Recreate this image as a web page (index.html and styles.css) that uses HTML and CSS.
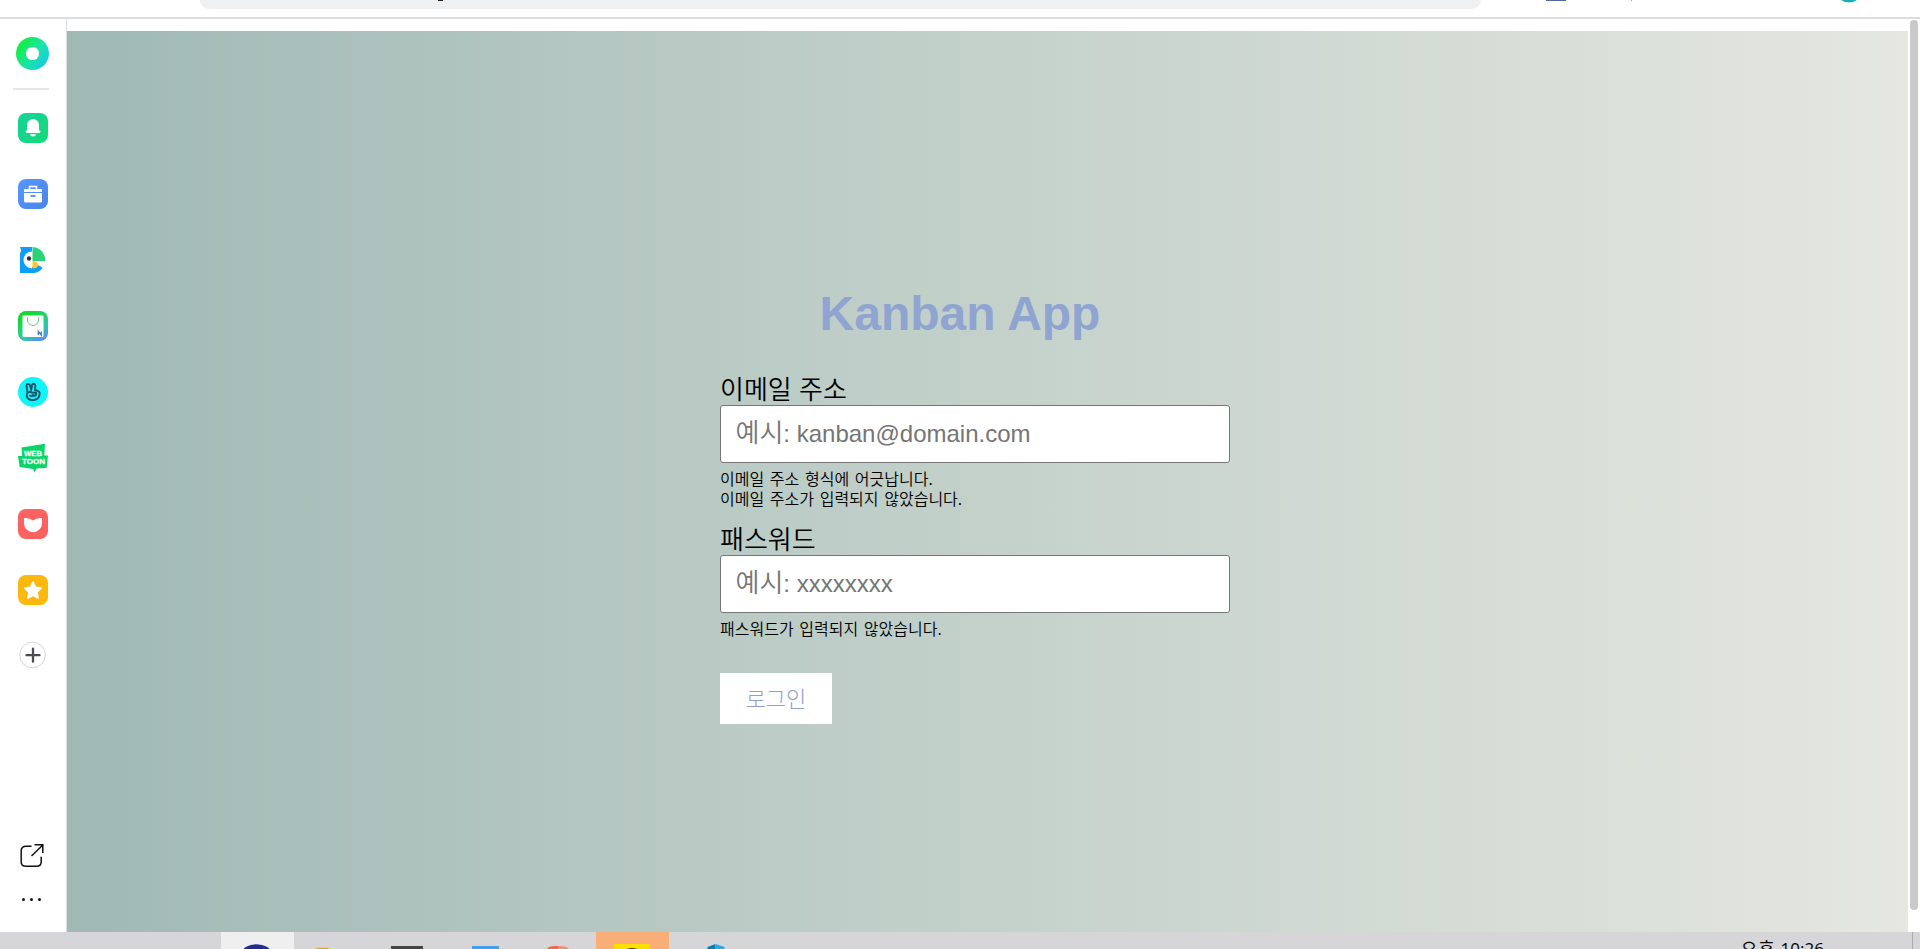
FILE: index.html
```html
<!DOCTYPE html>
<html lang="ko">
<head>
<meta charset="utf-8">
<title>Kanban App</title>
<link rel="stylesheet" href="styles.css">
</head>
<body>
<div class="screen">
  <header class="toolbar">
    <div class="address"><i class="address-mark"></i></div>
    <i class="tool-save"></i>
    <i class="tool-sep"></i>
    <svg class="tool-avatar" viewBox="0 0 18 3"><path d="M1 0h16q-3 2.400-8 2.400T1 0z" fill="#13aeb9"/></svg>
  </header>
  <div class="window">
    <nav class="sidebar">
      <svg class="home" viewBox="0 0 33 33"><defs><linearGradient id="home" x1="0" y1=".15" x2="1" y2=".85"><stop offset=".1" stop-color="#15ee3f"/><stop offset=".55" stop-color="#18e5a8"/><stop offset="1" stop-color="#1ec4ee"/></linearGradient></defs><circle cx="16.500" cy="16.500" r="16.500" fill="url(#home)"/><circle cx="16.500" cy="16.500" r="6.600" fill="#fff"/></svg>
      <i class="divider"></i>
      <div class="apps">
        <svg viewBox="0 0 30 30"><defs><linearGradient id="bell" x1="0" y1="0" x2="1" y2="1"><stop stop-color="#14d39b"/><stop offset="1" stop-color="#16da75"/></linearGradient></defs><rect width="30" height="30" rx="8" fill="url(#bell)"/><path d="M9 17.500V12a6 6 0 0 1 12 0v5.500h.6q1 .1.900 1.100t-1 1.400H8.600q-1-.4-1-1.400t.9-1.100z" fill="#fff"/><path d="M12 21.200h6q-.4 2.400-3 2.400t-3-2.400z" fill="#fff"/></svg>
        <svg viewBox="0 0 30 30"><defs><linearGradient id="work" x1="0" y1="0" x2="1" y2="1"><stop stop-color="#5698ff"/><stop offset="1" stop-color="#4a84e8"/></linearGradient></defs><rect width="30" height="30" rx="8" fill="url(#work)"/><path d="M11.500 10.500V7.500h7v3" fill="none" stroke="#fff" stroke-width="1.500"/><path d="M7 10h16q1 0 1 1v2H6v-2q0-1 1-1zM6 14h18v8q0 1.500-1.500 1.500h-15Q6 23.500 6 22z" fill="#fff"/><path d="M12.500 17h5" stroke="#4e8bf2" stroke-width="1.800"/></svg>
        <svg viewBox="0 0 30 30"><path d="M2 2h12v26H2V8Q4 6 2 2z" fill="#08a0fb"/><path d="M14 28c5 0 9-2 10.500-5.500L20 20l-6 2z" fill="#08a0fb"/><path d="M14.500 2q12 1 13 14h-13z" fill="#2bd277"/><path d="M14 6.500a8.500 8.500 0 0 0 0 17z" fill="#fff"/><circle cx="11" cy="13.500" r="2.200" fill="#3d2c38"/><path d="M14.500 16q5.500.5 6 5-2 2.500-6 2.500z" fill="#ffc12d"/></svg>
        <svg viewBox="0 0 30 30"><defs><linearGradient id="shop" x1=".2" y1="0" x2=".8" y2="1"><stop offset=".15" stop-color="#14d834"/><stop offset=".65" stop-color="#2ccaa8"/><stop offset="1" stop-color="#5b8af0"/></linearGradient></defs><rect width="30" height="30" rx="8" fill="url(#shop)"/><rect x="4.500" y="4.500" width="21" height="21.500" rx="1" fill="#fff"/><path d="M9.500 6v3a5.500 5.500 0 0 0 11 0V6" fill="none" stroke="#62cf88"/><path d="M20.300 24v-3.500l3 3.500v-3.500" fill="none" stroke="#3d83cf" stroke-width="1.400"/></svg>
        <svg viewBox="0 0 30 30"><circle cx="15" cy="15" r="15" fill="#12f4f5"/><g fill="none" stroke="#15516b" stroke-width="1.900" stroke-linejoin="round" stroke-linecap="round"><path d="M9.500 15.500l-1-6.500q.2-2 1.700-2t2 2l1 4 .8-5q.5-1.600 2-1.200t1.300 2L17 13.300q2-.6 3 1 1.500 0 1.700 1.700-.2 6-4.700 6.700-7 1.400-8.200-3.700-.3-2.200.7-3.500z"/><path d="M10 15.500q2-1.500 4 0l3 .2M12 18.500q2 1.500 3-.5 1.500 1.600 3-.1v-2.400"/></g></svg>
        <svg viewBox="0 0 30 30"><path d="M3.500 4.500 27 .8l-.7 11.700H30l-1.400 12.500-9.500.3-2.600 3.700-1.500-3L1.700 24 0 13h4.200z" fill="#06d568"/><text x="6" y="12.800" class="toon" textLength="18" lengthAdjust="spacingAndGlyphs">WEB</text><text x="4" y="20.800" class="toon" textLength="23" lengthAdjust="spacingAndGlyphs">TOON</text></svg>
        <svg viewBox="0 0 30 30"><rect width="30" height="30" rx="8" fill="#fd6260"/><path d="M6 9q5-.6 9 2.600Q19 8.400 24 9v5.200a9 9 0 0 1-18 0z" fill="#fff"/></svg>
        <svg viewBox="0 0 30 30"><rect width="30" height="30" rx="8" fill="#fdb80e"/><path d="M15 7l2.500 5.300 5.700.8-4.200 4 1.100 5.900L15 20.200 9.900 23l1.100-5.900-4.200-4 5.700-.8z" fill="#fff" stroke="#fff" stroke-width="1.600" stroke-linejoin="round"/></svg>
        <svg viewBox="0 0 30 30"><circle cx="14.500" cy="14" r="12.800" fill="#fff" stroke="#d4d4d4"/><path d="M8.500 14.200h13M15 7.700v13" stroke="#4a4a52" stroke-width="2.300" stroke-linecap="round"/></svg>
      </div>
      <svg class="open" viewBox="0 0 26 26"><path d="M12.500 3.200H7Q2.200 3.200 2.200 8v11q0 4.300 4.800 4.300h10.500q4.700 0 4.700-4.500v-5M12.500 13 23.500 2.200M15.500 1.700h8.300v8.200" fill="none" stroke="#111" stroke-width="1.500"/></svg>
      <div class="more"><i></i><i></i><i></i></div>
    </nav>
    <main class="page">
      <section class="login">
        <form class="form">
          <h1 class="title">Kanban App</h1>
          <div class="field">
            <label class="label" for="email">이메일 주소</label>
            <div class="control" id="email"><span class="ko">예시</span>: kanban@domain.com</div>
            <ul class="errors"><li>이메일 주소 형식에 어긋납니다.</li><li>이메일 주소가 입력되지 않았습니다.</li></ul>
          </div>
          <div class="field">
            <label class="label" for="password">패스워드</label>
            <div class="control" id="password"><span class="ko">예시</span>: xxxxxxxx</div>
            <ul class="errors"><li>패스워드가 입력되지 않았습니다.</li></ul>
          </div>
          <button class="submit" type="button">로그인</button>
        </form>
      </section>
      <div class="scroll"><i class="thumb"></i></div>
    </main>
  </div>
  <footer class="taskbar">
    <div class="task active"><svg viewBox="0 0 73 17"><ellipse cx="35.500" cy="21" rx="14.500" ry="8.800" fill="#222c91"/></svg></div>
    <div class="task"><svg viewBox="0 0 73 17"><path d="M20 17q0-1.200 1.500-1.200h10q1.500 0 1.500 1.200z" fill="#dcae1d"/></svg></div>
    <div class="task"><svg viewBox="0 0 73 17"><path d="M20 14h32v3H20z" fill="#444"/></svg></div>
    <div class="task"><svg viewBox="0 0 73 17"><path d="M26 14h27v3H26z" fill="#439fea"/></svg></div>
    <div class="task"><svg viewBox="0 0 73 17"><path d="M26 17q1-3 8-3h4v3z" fill="#ec6b45"/><path d="M37 14q10 0 11 3H37z" fill="#f58f6c"/></svg></div>
    <div class="task talk"><svg viewBox="0 0 73 17"><path d="M18 12h36v5H18z" fill="#fbdf00"/><path d="M31 17q5-2 10 0z" fill="#493b20"/></svg></div>
    <div class="task"><svg viewBox="0 0 73 17"><path d="M36.500 17v-2l8-3v5z" fill="#087ab8"/><path d="M44.500 12l9 3v2h-9z" fill="#25a7ec"/></svg></div>
    <div class="clock"><span>오후</span> 10:26</div>
    <i class="desktop"></i>
  </footer>
</div>
</body>
</html>
```
FILE: styles.css
```css
* { box-sizing: border-box; }
body { margin: 0; font-family: "Liberation Sans", "Noto Sans CJK KR", sans-serif; color: #000; }
svg { display: block; }
.screen { width: 1920px; height: 949px; display: flex; flex-direction: column; overflow: hidden; background: #fff; }
.toolbar { height: 19px; flex: none; display: flex; align-items: flex-start; border-bottom: 2px solid #dcdfe1; padding-left: 200px; }
.address { width: 1281px; height: 9px; background: #eff0f2; border-radius: 0 0 9px 9px; padding-left: 238px; }
.address-mark { display: block; width: 5px; height: 1px; background: #222; }
.tool-save { width: 20px; height: 1px; background: #53659b; margin-left: 65px; }
.tool-sep { width: 1px; height: 1px; background: #aaa; margin-left: 65px; }
.tool-avatar { width: 18px; height: 3px; margin-left: 208px; }

.window { height: 913px; flex: none; display: flex; }
.sidebar { width: 67px; flex: none; border-right: 1px solid #d9dee0; display: flex; flex-direction: column; padding-top: 18px; }
.home { width: 33px; height: 33px; margin-left: 16px; }
.divider { width: 36px; height: 2px; background: #e6e6e6; margin: 18px 0 0 13px; }
.apps { display: flex; flex-direction: column; gap: 36px; margin: 23px 0 0 18px; }
.apps svg { width: 30px; height: 30px; }
.toon { font: 700 8px "Liberation Sans", sans-serif; fill: #fff; stroke: #fff; stroke-width: .3px; }
.open { width: 26px; height: 26px; margin: 172px 0 0 19px; }
.more { display: flex; gap: 5px; margin: 29px 0 0 22px; }
.more i { width: 3px; height: 3px; border-radius: 50%; background: #111; }

.page { flex: 1; display: flex; padding-top: 12px; }
.login { width: 1841px; background: linear-gradient(90deg, #a0b9b5 0%, #c4d1cb 50%, #e5e7e0 100%); padding: 253px 0 0 653px; }
.form { width: 510px; }
.title { margin: 0; width: 480px; font-size: 48px; line-height: 60px; text-align: center; color: #8fa4d1; }
.field { height: 150px; }
.title + .field { margin-top: 27px; }
.label { display: block; height: 34px; font: 350 26px/34px "Noto Sans CJK KR", sans-serif; }
.control { height: 58px; border: 1px solid #767676; border-radius: 3px; background: #fff; padding: 0 14.500px; font-size: 24px; line-height: 56px; color: #757575; }
.ko { font: 350 26px/1 "Noto Sans CJK KR", sans-serif; }
.errors { list-style: none; margin: 5px 0 0; padding: 0; font: 350 16px/20px "Noto Sans CJK KR", sans-serif; word-spacing: 1.200px; }
.submit { display: block; margin-top: 2px; width: 112px; height: 51px; padding: 0; border: 0; background: #fff; color: #8fa0cc; font: 300 22px/49px "Noto Sans CJK KR", sans-serif; }
.submit { padding-bottom: 2px; }
.scroll { width: 12px; display: flex; justify-content: center; }
.thumb { width: 8px; height: 890px; margin-top: -11px; border-radius: 4px; background: #cacaca; }

.taskbar { height: 17px; flex: none; display: flex; overflow: hidden; background: #d6d6d8; padding-left: 221px; }
.task { width: 73px; flex: none; margin-right: 2px; }
.task svg { width: 73px; height: 17px; }
.active { background: #efefef; }
.talk { background: #f8ae76; }
.clock { margin: 4px 0 0 995px; font: 17px/24px "Open Sans", sans-serif; white-space: nowrap; height: 24px; width: 90px; }
.clock span { font: 17.500px/24px "Noto Sans CJK KR", sans-serif; letter-spacing: 1.500px; }
.desktop { width: 1px; margin-left: 81px; background: #aaa; }
```
